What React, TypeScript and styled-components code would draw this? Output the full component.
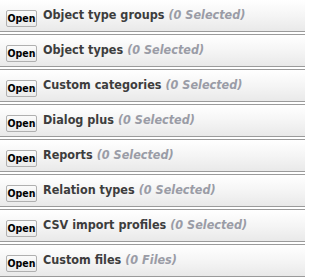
import React from 'react';
import styled, { createGlobalStyle } from 'styled-components';

const GlobalStyle = createGlobalStyle`
  html, body {
    margin: 0;
    padding: 0;
    background: #fff;
  }
`;

const List = styled.div`
  display: flex;
  flex-direction: column;
  gap: 2px;
  margin-top: -1px;
  width: 305px;
`;

const Row = styled.div`
  display: flex;
  align-items: flex-start;
  gap: 6px;
  height: 31px;
  padding-left: 6px;
  border-top: 1px solid #9a9a9a;
  border-bottom: 1px solid #9a9a9a;
  background: linear-gradient(to bottom, #ffffff 0%, #f5f5f5 50%, #e9e9e9 100%);
`;

const OpenButton = styled.button`
  height: 17px;
  width: 31px;
  padding: 0;
  margin: 10px 0 0 0;
  border: 1px solid #b0b0b0;
  border-radius: 2px;
  background: linear-gradient(to bottom, #fbfbfb 0%, #ebebeb 100%);
  font-family: 'DejaVu Sans Condensed', 'DejaVu Sans', sans-serif;
  font-stretch: condensed;
  font-size: 10.5px;
  font-weight: bold;
  color: #000;
  line-height: 15px;
`;

const Title = styled.span`
  margin-top: 6px;
  line-height: 18px;
  font-family: 'DejaVu Sans Condensed', 'DejaVu Sans', sans-serif;
  font-stretch: condensed;
  font-size: 12.5px;
  font-weight: bold;
  color: #3d3d3d;
  white-space: nowrap;
`;

const Count = styled.em`
  font-style: italic;
  color: #9a9ca6;
  margin-left: 4px;
`;

const sections = [
  { title: 'Object type groups', count: '(0 Selected)' },
  { title: 'Object types', count: '(0 Selected)' },
  { title: 'Custom categories', count: '(0 Selected)' },
  { title: 'Dialog plus', count: '(0 Selected)' },
  { title: 'Reports', count: '(0 Selected)' },
  { title: 'Relation types', count: '(0 Selected)' },
  { title: 'CSV import profiles', count: '(0 Selected)' },
  { title: 'Custom files', count: '(0 Files)' },
];

const App: React.FC = () => (
  <>
    <GlobalStyle />
    <List>
      {sections.map(({ title, count }) => (
        <Row key={title}>
          <OpenButton type="button">Open</OpenButton>
          <Title>
            {title}
            <Count>{count}</Count>
          </Title>
        </Row>
      ))}
    </List>
  </>
);

export default App;
